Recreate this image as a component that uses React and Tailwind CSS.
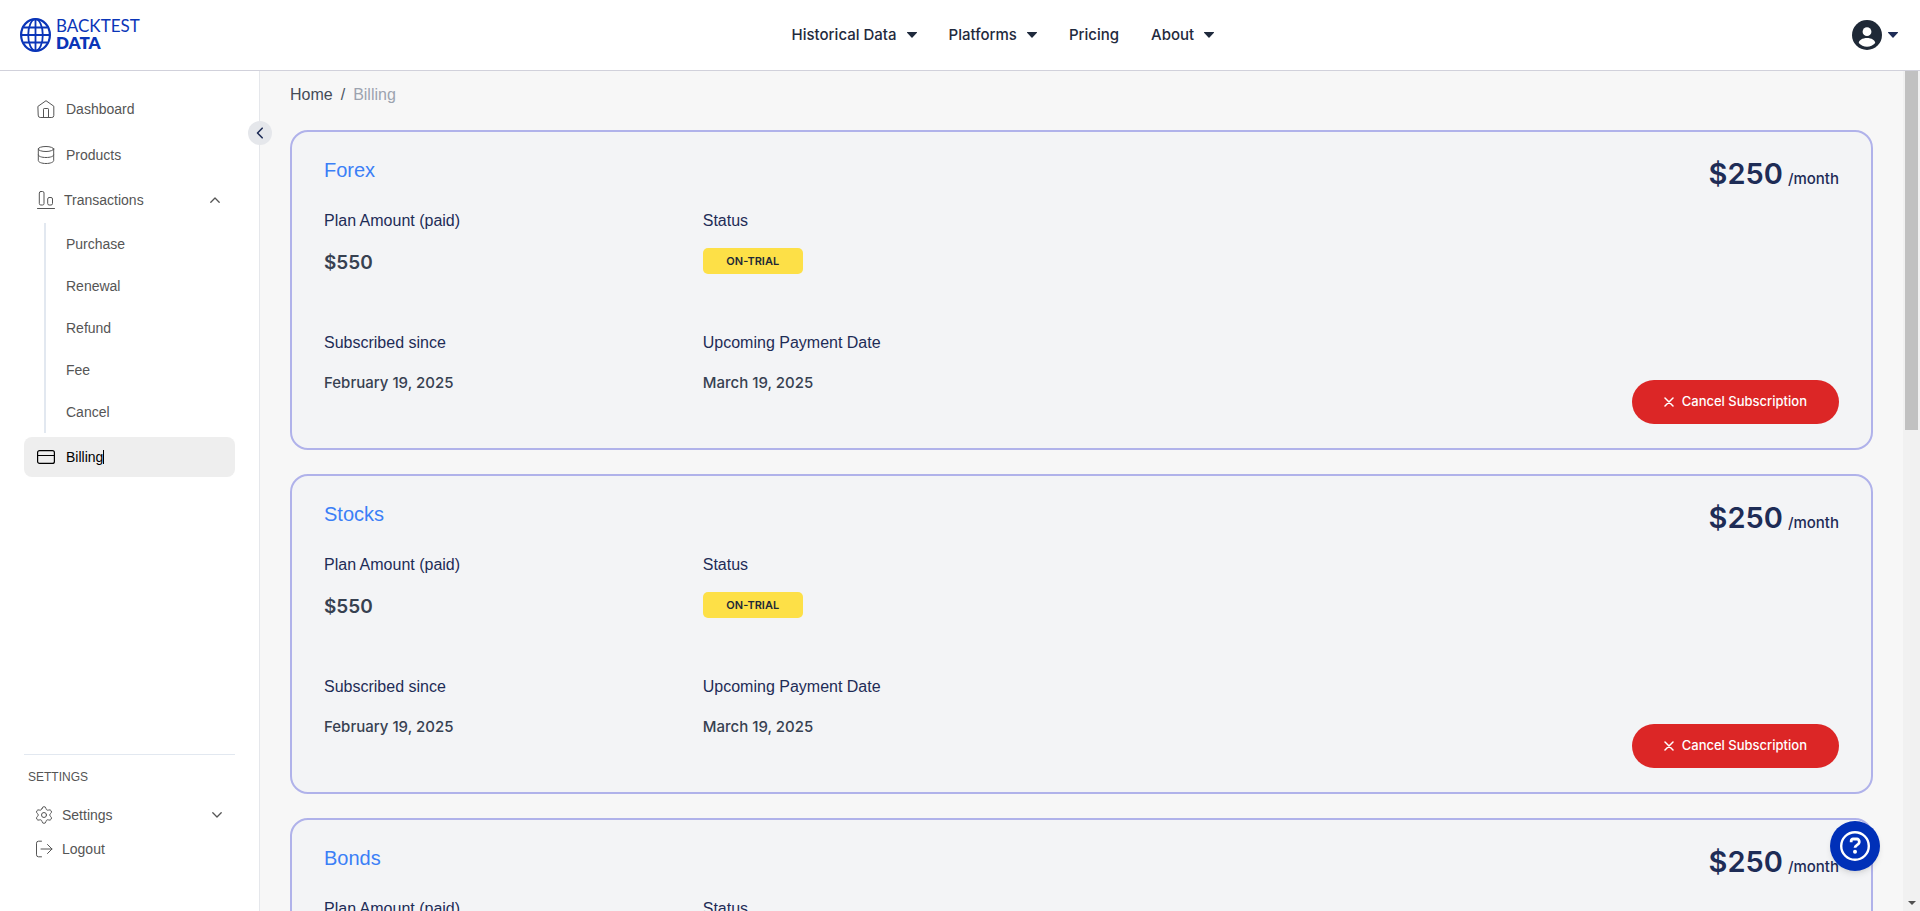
import React from "react";
import { Settings } from "lucide-react";

const sans = "font-['Liberation_Sans',Arial,sans-serif]";
const medium = "font-['Inter',sans-serif] font-medium";
const semibold = "font-['Inter',sans-serif] font-semibold";

const stroke = {
  fill: "none",
  stroke: "currentColor",
  strokeLinecap: "round",
  strokeLinejoin: "round",
  "aria-hidden": true,
};

function Caret({ className = "" }) {
  return (
    <svg viewBox="0 0 10 6" className={`h-[6px] w-[10px] ${className}`} fill="currentColor" aria-hidden="true">
      <path d="M0.4 0h9.200c.4 0 .5.400.3.700L5.500 5.600a.7.7 0 0 1-1 0L.1.700C-.1.400 0 0 .4 0z" />
    </svg>
  );
}

function Chevron({ className = "" }) {
  return (
    <svg viewBox="0 0 10 6" className={`h-[6px] w-[10px] ${className}`} {...stroke} strokeWidth="1.3">
      <path d="M0.8 5.2 5 1l4.2 4.2" />
    </svg>
  );
}

function HomeIcon() {
  return (
    <svg viewBox="0 0 18 18" className="size-[18px]" {...stroke} strokeWidth="1">
      <path d="M1.2 6.200 9 .7l7.800 5.500V15.500a2 2 0 0 1-2 2H3.200a2 2 0 0 1-2-2z" />
      <path d="M6.500 17.500V9.200a.7.7 0 0 1 .7-.7h3.600a.7.7 0 0 1 .7.7v8.300" />
    </svg>
  );
}

function DatabaseIcon() {
  return (
    <svg viewBox="0 0 18 18" className="size-[18px]" {...stroke} strokeWidth="1">
      <ellipse cx="9" cy="3" rx="7.700" ry="2.500" />
      <path d="M1.300 3v11.500c0 1.700 3.400 3 7.700 3s7.700-1.300 7.700-3V3" />
      <path d="M1.300 9c0 1.400 3.400 2.500 7.700 2.500s7.700-1.100 7.700-2.500" />
    </svg>
  );
}

function ChartIcon() {
  return (
    <svg viewBox="0 0 18 18" className="size-[18px]" {...stroke} strokeWidth="1">
      <rect x="2.300" y=".5" width="4.700" height="13.500" rx="1.500" />
      <rect x="10.700" y="6.500" width="4.800" height="7.500" rx="1.500" />
      <path d="M.5 17.500h17" />
    </svg>
  );
}

function CardIcon() {
  return (
    <svg viewBox="0 0 18 18" className="size-[18px]" {...stroke} strokeWidth="1.2">
      <rect x=".6" y="2.600" width="16.800" height="12.800" rx="2" />
      <path d="M.6 7.500h16.800" />
    </svg>
  );
}

function LogoutIcon() {
  return (
    <svg viewBox="0 0 18 18" className="size-[18px]" {...stroke} strokeWidth="1">
      <path d="M6.500 1.200h-3a2 2 0 0 0-2 2v11.600a2 2 0 0 0 2 2h3M6 9h11M12.500 4.500 17 9l-4.500 4.500" />
    </svg>
  );
}

function AccountIcon() {
  return (
    <svg viewBox="0 0 30 30" className="size-[30px]" aria-hidden="true">
      <circle cx="15" cy="15" r="15" fill="currentColor" />
      <circle cx="15" cy="11.700" r="4.400" fill="#fff" />
      <path d="M6.800 23c0-2.800 3.700-5 8.200-5s8.200 2.200 8.200 5c-2 2.400-5 3.700-8.200 3.700s-6.200-1.300-8.200-3.700z" fill="#fff" />
    </svg>
  );
}

function Logo() {
  return (
    <a href="#" className="flex items-center gap-[5px] pr-[14px] text-[#0a35b8]">
      <svg viewBox="0 0 31 34" className="h-[34px] w-[31px]" fill="none" stroke="currentColor" strokeWidth="1.800" aria-hidden="true">
        <ellipse cx="15.500" cy="17" rx="14.400" ry="15.900" strokeWidth="2.200" />
        <ellipse cx="15.500" cy="17" rx="7.300" ry="15.900" />
        <path d="M15.500 1v32M1 17h29M3.500 9.500h24M3.500 24.500h24" />
      </svg>
      <span className="flex flex-col pb-[2px] font-['Lato',sans-serif] text-[17px] leading-[17px]">
        <span>BACKTEST</span>
        <span className="font-extrabold">DATA</span>
      </span>
    </a>
  );
}

const navItems = [
  { label: "Historical Data", menu: true },
  { label: "Platforms", menu: true },
  { label: "Pricing", menu: false },
  { label: "About", menu: true },
];

function Header() {
  return (
    <header className="flex h-[71px] shrink-0 items-center justify-between border-b border-[#d1d1db] bg-white pr-[22px] pl-5">
      <Logo />
      <nav className={`flex items-center gap-8 text-[15px] text-[#1f2a3d] ${medium}`}>
        {navItems.map((n) =>
          n.menu ? (
            <button key={n.label} type="button" className="flex items-center gap-[10px]">
              {n.label}
              <Caret />
            </button>
          ) : (
            <a key={n.label} href="#">
              {n.label}
            </a>
          )
        )}
      </nav>
      <button type="button" aria-label="Account" className="flex items-center gap-[6px] text-[#1f2937]">
        <AccountIcon />
        <Caret className="text-[#1e2c56]" />
      </button>
    </header>
  );
}

const subItems = ["Purchase", "Renewal", "Refund", "Fee", "Cancel"];

function Sidebar() {
  return (
    <aside className="relative flex w-[260px] shrink-0 flex-col border-r border-[#e5e7eb] bg-white px-6 pt-[18px] pb-[45px] text-sm text-[#555]">
      <button
        type="button"
        aria-label="Collapse sidebar"
        className="absolute top-[50px] -right-[13px] z-10 flex size-6 items-center justify-center rounded-full bg-[#e5e7eb] text-[#1e2c56]"
      >
        <svg viewBox="0 0 8 12" className="h-[12px] w-[8px]" {...stroke} strokeWidth="1.600">
          <path d="M6.200 1.200 1.500 6l4.700 4.800" />
        </svg>
      </button>
      <nav className="flex flex-col">
        <a href="#" className="mb-[6px] flex h-10 items-center gap-[11px] px-[13px]">
          <HomeIcon />
          Dashboard
        </a>
        <a href="#" className="mb-[5px] flex h-10 items-center gap-[11px] px-[13px]">
          <DatabaseIcon />
          Products
        </a>
        <button type="button" aria-expanded="true" className="flex h-10 items-center gap-[9px] pr-[15px] pl-[13px] text-left">
          <ChartIcon />
          <span className="grow">Transactions</span>
          <Chevron />
        </button>
        <ul className="mt-[3px] mb-1 ml-5 border-l-2 border-[#e2e8f0]">
          {subItems.map((s) => (
            <li key={s}>
              <a href="#" className="flex h-[42px] items-center pl-5">
                {s}
              </a>
            </li>
          ))}
        </ul>
        <a href="#" aria-current="page" className="flex h-10 items-center gap-[11px] rounded-lg bg-[#eeeeee] px-[13px] text-black">
          <CardIcon />
          <span className="border-r border-black leading-[14px]">Billing</span>
        </a>
      </nav>
      <div className="mt-auto border-t border-[#e2e8f0] pt-[13px]">
        <h2 className="pl-1 text-[12px] leading-[18px]">SETTINGS</h2>
        <button type="button" aria-expanded="false" className="mt-[12px] flex h-[34px] w-full items-center gap-2 pr-[13px] pl-[10px] text-left">
          <Settings className="size-5" strokeWidth={1.2} aria-hidden="true" />
          <span className="grow">Settings</span>
          <Chevron className="rotate-180" />
        </button>
        <button type="button" className="flex h-[34px] w-full items-center gap-[9px] pl-[11px] text-left">
          <LogoutIcon />
          Logout
        </button>
      </div>
    </aside>
  );
}

function PlanCard({ name }) {
  return (
    <article className="relative h-[320px] rounded-[18px] border-2 border-[#b0b2ea] bg-[#f3f4f6] px-8 pt-6 pb-6 text-base text-[#1e2c56]">
      <div className="flex h-[38px] items-start justify-between">
        <h2 className="text-xl leading-7 text-[#3b7ff6]">{name}</h2>
        <p className="flex items-baseline gap-[5px]">
          <span className={`text-[29px] leading-[36px] ${semibold}`}>$250</span>
          <span className={`text-[15px] ${medium}`}>/month</span>
        </p>
      </div>
      <dl className="grid grid-cols-4 pt-[15px]">
        <div className="h-[122px]">
          <dt className="leading-6">Plan Amount (paid)</dt>
          <dd className={`mt-4 text-[19px] leading-7 text-[#374151] ${semibold}`}>$550</dd>
        </div>
        <div className="h-[122px]">
          <dt className="leading-6">Status</dt>
          <dd className={`mt-[15px] flex h-[26px] w-[100px] items-center justify-center rounded-[5px] bg-[#fde047] text-[11px] text-[#1f2937] ${semibold}`}>
            ON-TRIAL
          </dd>
        </div>
        <div className="col-start-1">
          <dt className="leading-6">Subscribed since</dt>
          <dd className={`mt-4 text-[15px] leading-6 text-[#374151] ${medium}`}>February 19, 2025</dd>
        </div>
        <div>
          <dt className="leading-6">Upcoming Payment Date</dt>
          <dd className={`mt-4 text-[15px] leading-6 text-[#374151] ${medium}`}>March 19, 2025</dd>
        </div>
      </dl>
      <button
        type="button"
        className={`absolute right-8 bottom-6 flex h-11 items-center gap-2 rounded-full bg-[#dc2626] px-8 text-[13px] text-white ${medium}`}
      >
        <svg viewBox="0 0 10 10" className="size-[10px]" {...stroke} strokeWidth="1.500">
          <path d="m1 1 8 8M9 1 1 9" />
        </svg>
        Cancel Subscription
      </button>
    </article>
  );
}

export default function App() {
  return (
    <div className={`flex h-screen flex-col overflow-hidden ${sans}`}>
      <Header />
      <div className="flex min-h-0 grow">
        <Sidebar />
        <main className="min-w-0 grow overflow-y-auto bg-[#f7f7f7] px-[30px] pt-3 pb-6 [scrollbar-width:none]">
          <nav aria-label="Breadcrumb" className="flex gap-2 text-base text-[#4b5563]">
            <a href="#" className="text-[#444b57]">
              Home
            </a>
            <span>/</span>
            <span className="text-[#9ca3af]">Billing</span>
          </nav>
          <div className="mt-[23px] flex flex-col gap-6">
            <PlanCard name="Forex" />
            <PlanCard name="Stocks" />
            <PlanCard name="Bonds" />
          </div>
        </main>
        <div aria-hidden="true" className="flex w-[17px] shrink-0 flex-col items-center justify-between bg-[#f1f1f1] pb-[6px]">
          <div className="h-[43%] w-[13px] bg-[#c1c1c1]" />
          <svg viewBox="0 0 8 4" className="h-[4px] w-[8px]" fill="#505050">
            <path d="M0 0h8L4 4z" />
          </svg>
        </div>
      </div>
      <button
        type="button"
        aria-label="Help"
        className="fixed right-10 bottom-10 z-20 flex size-[50px] items-center justify-center rounded-full bg-[#0030b8] text-white shadow-md"
      >
        <svg viewBox="0 0 30 30" className="size-[30px]" {...stroke} strokeWidth="2.400">
          <circle cx="15" cy="15" r="13.800" />
          <path d="M11.200 11.300V9.800a1.800 1.800 0 0 1 1.800-1.800h4a2.200 2.200 0 0 1 2.200 2.200v1.300c0 2.300-4.200 2.400-4.200 5.200" strokeWidth="2.800" strokeLinecap="butt" />
          <circle cx="15" cy="20.800" r="2" fill="currentColor" stroke="none" />
        </svg>
      </button>
    </div>
  );
}
